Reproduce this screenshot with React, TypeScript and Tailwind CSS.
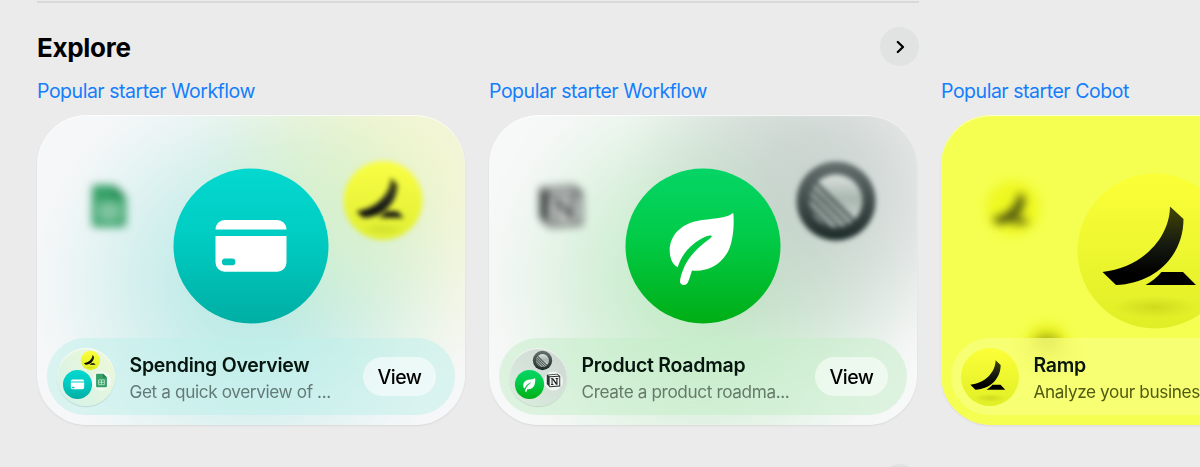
import { useId, type ReactNode } from "react";

/* ---------- glyphs, all centred on 0,0 inside a 155-unit disc ---------- */

function RampMark({ fill }: { fill: string }) {
  return (
    <g fill={fill}>
      <path d="M15 -44.5L28.5 -32C28.500 4 1 32.500 -39 34L-52.500 21C-15 17 14.500 -11 15 -44.5Z" />
      <path d="M-9.500 34C-4 31 2 26.500 6.500 21H28L41 34Z" />
    </g>
  );
}

function RampDisc() {
  const id = useId();
  return (
    <g>
      <defs>
        <linearGradient id={id + "d"} x1="0" y1="0" x2="0" y2="1">
          <stop offset="0" stopColor="#fbff38" />
          <stop offset="1" stopColor="#e0ee26" />
        </linearGradient>
        <linearGradient id={id + "m"} gradientUnits="userSpaceOnUse" x1="0" y1="-46" x2="0" y2="34">
          <stop offset="0" stopColor="#454805" />
          <stop offset="0.5" stopColor="#161a10" />
          <stop offset="0.85" stopColor="#000000" />
        </linearGradient>
        <radialGradient id={id + "s"}>
          <stop offset="0" stopColor="#8f9a00" stopOpacity="0.25" />
          <stop offset="1" stopColor="#8f9a00" stopOpacity="0" />
        </radialGradient>
      </defs>
      <circle r="77.500" fill={`url(#${id}d)`} />
      <ellipse cx="0" cy="56" rx="42" ry="11" fill={`url(#${id}s)`} />
      <RampMark fill={`url(#${id}m)`} />
    </g>
  );
}

function CardDisc() {
  const id = useId();
  return (
    <g>
      <defs>
        <linearGradient id={id} x1="0" y1="0" x2="0" y2="1">
          <stop offset="0" stopColor="#04d8cf" />
          <stop offset="0.45" stopColor="#00ccc2" />
          <stop offset="1" stopColor="#00aea3" />
        </linearGradient>
      </defs>
      <circle r="77.500" fill={`url(#${id})`} />
      <path
        fill="#fff"
        d="M-35.500 -16.500V-16.800A9.200 9.200 0 0 1 -26.300 -26H26.300A9.200 9.200 0 0 1 35.500 -16.800V-16.500Z"
      />
      <path
        fill="#fff"
        fillRule="evenodd"
        d="M-35.500 -10H35.500V16.500A9.200 9.200 0 0 1 26.300 25.700H-26.300A9.200 9.200 0 0 1 -35.500 16.500ZM-25.700 12.500A3.300 3.300 0 0 0 -25.700 19.300H-19A3.300 3.300 0 0 0 -19 12.500Z"
      />
    </g>
  );
}

function LeafDisc() {
  const id = useId();
  return (
    <g>
      <defs>
        <linearGradient id={id} x1="0" y1="0" x2="0" y2="1">
          <stop offset="0" stopColor="#05d566" />
          <stop offset="0.45" stopColor="#01cb47" />
          <stop offset="1" stopColor="#00ae15" />
        </linearGradient>
      </defs>
      <circle r="77.500" fill={`url(#${id})`} />
      <path
        fill="#fff"
        d="M29.600 -32.800C22 -27 8 -28 -6 -25C-24 -21 -33.500 -9 -33.300 5C-33 13 -30.500 18 -25.300 21.300C-21 7 -10 -4 3 -9.500C8.500 -11.500 10.500 -10.500 7 -7.500C-6 2 -15 11 -20 24C-22 29 -23 33 -23 36C-22.500 39.500 -17.500 40.200 -15.300 36.800C-13.500 33 -12.500 29 -11 24.500C6 26 19 18 26 3.500C30.500 -7 31.200 -22 30.400 -32.300C30.300 -33 30 -33.100 29.600 -32.800Z"
      />
    </g>
  );
}

function RingDisc() {
  const id = useId();
  return (
    <g>
      <defs>
        <linearGradient id={id} x1="0" y1="0" x2="0" y2="1">
          <stop offset="0" stopColor="#66716f" />
          <stop offset="1" stopColor="#1c2a28" />
        </linearGradient>
        <linearGradient id={id + "i"} x1="0" y1="0" x2="0" y2="1">
          <stop offset="0" stopColor="#dde3df" />
          <stop offset="0.45" stopColor="#a9b6b0" />
          <stop offset="1" stopColor="#d2dad6" />
        </linearGradient>
        <clipPath id={id + "c"}>
          <circle r="52" />
        </clipPath>
      </defs>
      <circle r="77.500" fill={`url(#${id})`} />
      <circle r="52" fill={`url(#${id}i)`} />
      <g clipPath={`url(#${id}c)`}>
        <g transform="rotate(45)" stroke="#4a5855" strokeWidth="8">
          <path d="M-70 3H70M-70 17H70M-70 31H70M-70 45H70" />
        </g>
      </g>
    </g>
  );
}

function SheetGlyph() {
  return (
    <g>
      <path
        fill="#35a167"
        d="M-14 -21H5L17 -9V18A3 3 0 0 1 14 21H-14A3 3 0 0 1 -17 18V-18A3 3 0 0 1 -14 -21Z"
      />
      <path fill="#1f7f4a" d="M5 -21L17 -9H5Z" />
      <path fill="none" stroke="#d8efe2" strokeWidth="2.200" d="M-9 -2H9V13H-9ZM-9 5.500H9M0 -2V13" />
    </g>
  );
}

function CubeGlyph() {
  return (
    <g>
      <path fill="#2c3331" d="M-21 -18L12 -21L21 -14V19L-12 21L-21 11Z" />
      <path fill="#f4f6f5" d="M-18 -16L11 -18.500L16 -14.500L-12 -13Z" />
      <path fill="#f4f6f5" d="M-12 -10L18 -11.500V16L-12 18Z" />
      <path
        fill="#1d2422"
        d="M-8 -7H-1L9 7V-5L6 -6V-8H15V-6L12.500 -5V13H8L-3 -3V11L0 12V14H-8V12L-6 11V-5L-8 -5Z"
      />
    </g>
  );
}

/* ---------- card artwork ---------- */

function Art({ children }: { children: ReactNode }) {
  return (
    <svg viewBox="0 0 428 310" className="absolute inset-0 h-full w-full" aria-hidden="true">
      {children}
    </svg>
  );
}

function Glow({ cx, cy, r, color, strength }: { cx: number; cy: number; r: number; color: string; strength: number }) {
  const id = useId();
  return (
    <g>
      <radialGradient id={id}>
        <stop offset="0" stopColor={color} stopOpacity={strength} />
        <stop offset="0.25" stopColor={color} stopOpacity={strength * 0.88} />
        <stop offset="0.5" stopColor={color} stopOpacity={strength * 0.57} />
        <stop offset="0.75" stopColor={color} stopOpacity={strength * 0.23} />
        <stop offset="0.9" stopColor={color} stopOpacity={strength * 0.06} />
        <stop offset="1" stopColor={color} stopOpacity="0" />
      </radialGradient>
      <circle cx={cx} cy={cy} r={r} fill={`url(#${id})`} />
    </g>
  );
}

function SpendingArt() {
  return (
    <Art>
      <rect width="428" height="310" fill="#f6f7f8" />
      <Glow cx={352} cy={62} r={225} color="#eef4bc" strength={0.72} />
      <Glow cx={214} cy={168} r={225} color="#9ee4de" strength={0.68} />
      <Glow cx={290} cy={95} r={130} color="#e2f3c4" strength={0.45} />
      <g className="blur-[4.5px]">
        <g transform="translate(72 91)">
          <SheetGlyph />
        </g>
      </g>
      <g className="blur-[2.6px]" opacity="0.92">
        <g transform="translate(346 85.500) scale(0.510)">
          <RampDisc />
        </g>
      </g>
      <g transform="translate(214 131)">
        <CardDisc />
      </g>
    </Art>
  );
}

function RoadmapArt() {
  return (
    <Art>
      <rect width="428" height="310" fill="#f7f8f8" />
      <Glow cx={214} cy={165} r={230} color="#a8e4ae" strength={0.66} />
      <Glow cx={330} cy={68} r={205} color="#bfc7c5" strength={0.72} />
      <g className="blur-[4.5px]">
        <g transform="translate(72 91)">
          <CubeGlyph />
        </g>
      </g>
      <g className="blur-[2.6px]">
        <g transform="translate(347 86) scale(0.510)">
          <RingDisc />
        </g>
      </g>
      <g transform="translate(214 131)">
        <LeafDisc />
      </g>
    </Art>
  );
}

function RampArt() {
  return (
    <Art>
      <rect width="428" height="310" fill="#f5ff51" />
      <g className="blur-[6px]">
        <circle cx="72" cy="93" r="27" fill="#eef820" />
      </g>
      <g className="blur-[5px]">
        <g transform="translate(72 95) scale(0.400)">
          <RampMark fill="#31370a" />
        </g>
      </g>
      <g className="blur-[6px]">
        <circle cx="106" cy="230" r="22" fill="#ecf522" />
        <ellipse cx="106" cy="229" rx="13" ry="9" fill="#8d9714" opacity="0.850" />
      </g>
      <g transform="translate(214 136)">
        <RampDisc />
      </g>
    </Art>
  );
}

/* ---------- avatars in the footer pill ---------- */

function ClusterAvatar({
  tone,
  main,
  top,
  side,
}: {
  tone: string;
  main: ReactNode;
  top: ReactNode;
  side: ReactNode;
}) {
  return (
    <svg
      viewBox="0 0 58 58"
      className={`h-[58px] w-[58px] shrink-0 rounded-full shadow-[0_1px_1px_rgba(0,60,50,0.15),inset_0_1px_1px_rgba(255,255,255,0.8)] ${tone}`}
      aria-hidden="true"
    >
      <g transform="translate(33.500 12.500) scale(0.125)">{top}</g>
      <circle cx="44.500" cy="33" r="9.500" fill="#f4faf8" fillOpacity="0.85" />
      <g transform="translate(44.500 32.500) scale(0.320)">{side}</g>
      <g transform="translate(20.500 36.500) scale(0.188)">{main}</g>
    </svg>
  );
}

/* ---------- cards ---------- */

type Item = {
  kind: string;
  title: string;
  text: string;
  art: ReactNode;
  avatar: ReactNode;
  pill: string;
  muted: string;
};

const items: Item[] = [
  {
    kind: "Popular starter Workflow",
    title: "Spending Overview",
    text: "Get a quick overview of ...",
    art: <SpendingArt />,
    avatar: (
      <ClusterAvatar
        tone="bg-linear-to-tr from-[#d3f2ea] to-[#eff8d6]"
        main={<CardDisc />}
        top={<RampDisc />}
        side={<SheetGlyph />}
      />
    ),
    pill: "bg-[#bdefe9]/50",
    muted: "text-[#647a77]",
  },
  {
    kind: "Popular starter Workflow",
    title: "Product Roadmap",
    text: "Create a product roadma...",
    art: <RoadmapArt />,
    avatar: (
      <ClusterAvatar
        tone="bg-linear-to-tr from-[#dcefdf] to-[#cdd5d2]"
        main={<LeafDisc />}
        top={<RingDisc />}
        side={<CubeGlyph />}
      />
    ),
    pill: "bg-[#c4edc7]/50",
    muted: "text-[#657a68]",
  },
  {
    kind: "Popular starter Cobot",
    title: "Ramp",
    text: "Analyze your business spend",
    art: <RampArt />,
    avatar: (
      <svg viewBox="-77.5 -77.5 155 155" className="h-[58px] w-[58px] shrink-0" aria-hidden="true">
        <RampDisc />
      </svg>
    ),
    pill: "bg-[#f8ff82]/70",
    muted: "text-[#515a12]",
  },
];

function ExploreCard({ item }: { item: Item }) {
  return (
    <article className="w-[428px] shrink-0">
      <p className="h-[24px] text-[19.500px] leading-[24px] whitespace-nowrap text-[#147efb] tracking-[-0.47px]">
        {item.kind}
      </p>
      <div className="relative mt-[12px] flex h-[310px] flex-col justify-end overflow-hidden rounded-[50px] p-[10px] shadow-[0_1px_2px_rgba(0,0,0,0.08)]">
        {item.art}
        <div className="pointer-events-none absolute inset-0 rounded-[50px] shadow-[inset_0_1px_1px_rgba(255,255,255,0.8)]" />
        <div
          className={`relative flex h-[77px] items-center rounded-full pr-[19px] pl-[10px] backdrop-blur-md ${item.pill}`}
        >
          {item.avatar}
          <div className="ml-[14.5px] min-w-0 flex-1 pt-[3px] whitespace-nowrap">
            <h3 className="text-[19.500px] leading-[27px] font-semibold tracking-[-0.27px] text-[#07150f]">
              {item.title}
            </h3>
            <p className={`text-[17.200px] leading-[25px] tracking-[-0.38px] ${item.muted}`}>{item.text}</p>
          </div>
          <button className="h-[39px] w-[73px] shrink-0 rounded-full bg-white/55 pt-[2px] text-[19.500px] font-medium tracking-[-0.5px] text-black">
            View
          </button>
        </div>
      </div>
    </article>
  );
}

function NextButton() {
  return (
    <button
      className="flex h-[39px] w-[39px] shrink-0 items-center justify-center rounded-full bg-[#e1e3e3]"
      aria-label="Next"
    >
      <svg viewBox="0 0 14 14" className="h-[14px] w-[14px]" aria-hidden="true">
        <path d="M4.800 2L10 7L4.800 12" fill="none" stroke="#000" strokeWidth="2.300" strokeLinecap="round" strokeLinejoin="round" />
      </svg>
    </button>
  );
}

export default function App() {
  return (
    <main className="h-[467px] w-[1200px] overflow-hidden bg-[#ebebeb] pt-px pl-[37px] font-['Inter',sans-serif]">
      <div className="h-[2px] w-[882px] bg-[#d8dada]" />
      <section className="pt-[24px]">
        <header className="flex h-[39px] w-[882px] items-center justify-between">
          <h2 className="pt-[2px] text-[26px] leading-[32px] font-bold tracking-[-0.3px] text-black">Explore</h2>
          <NextButton />
        </header>
        <div className="mt-[13px] flex gap-[24px]">
          {items.map((item) => (
            <ExploreCard key={item.title} item={item} />
          ))}
        </div>
      </section>
      <div className="mt-[39px] flex w-[882px] justify-end">
        <NextButton />
      </div>
    </main>
  );
}
